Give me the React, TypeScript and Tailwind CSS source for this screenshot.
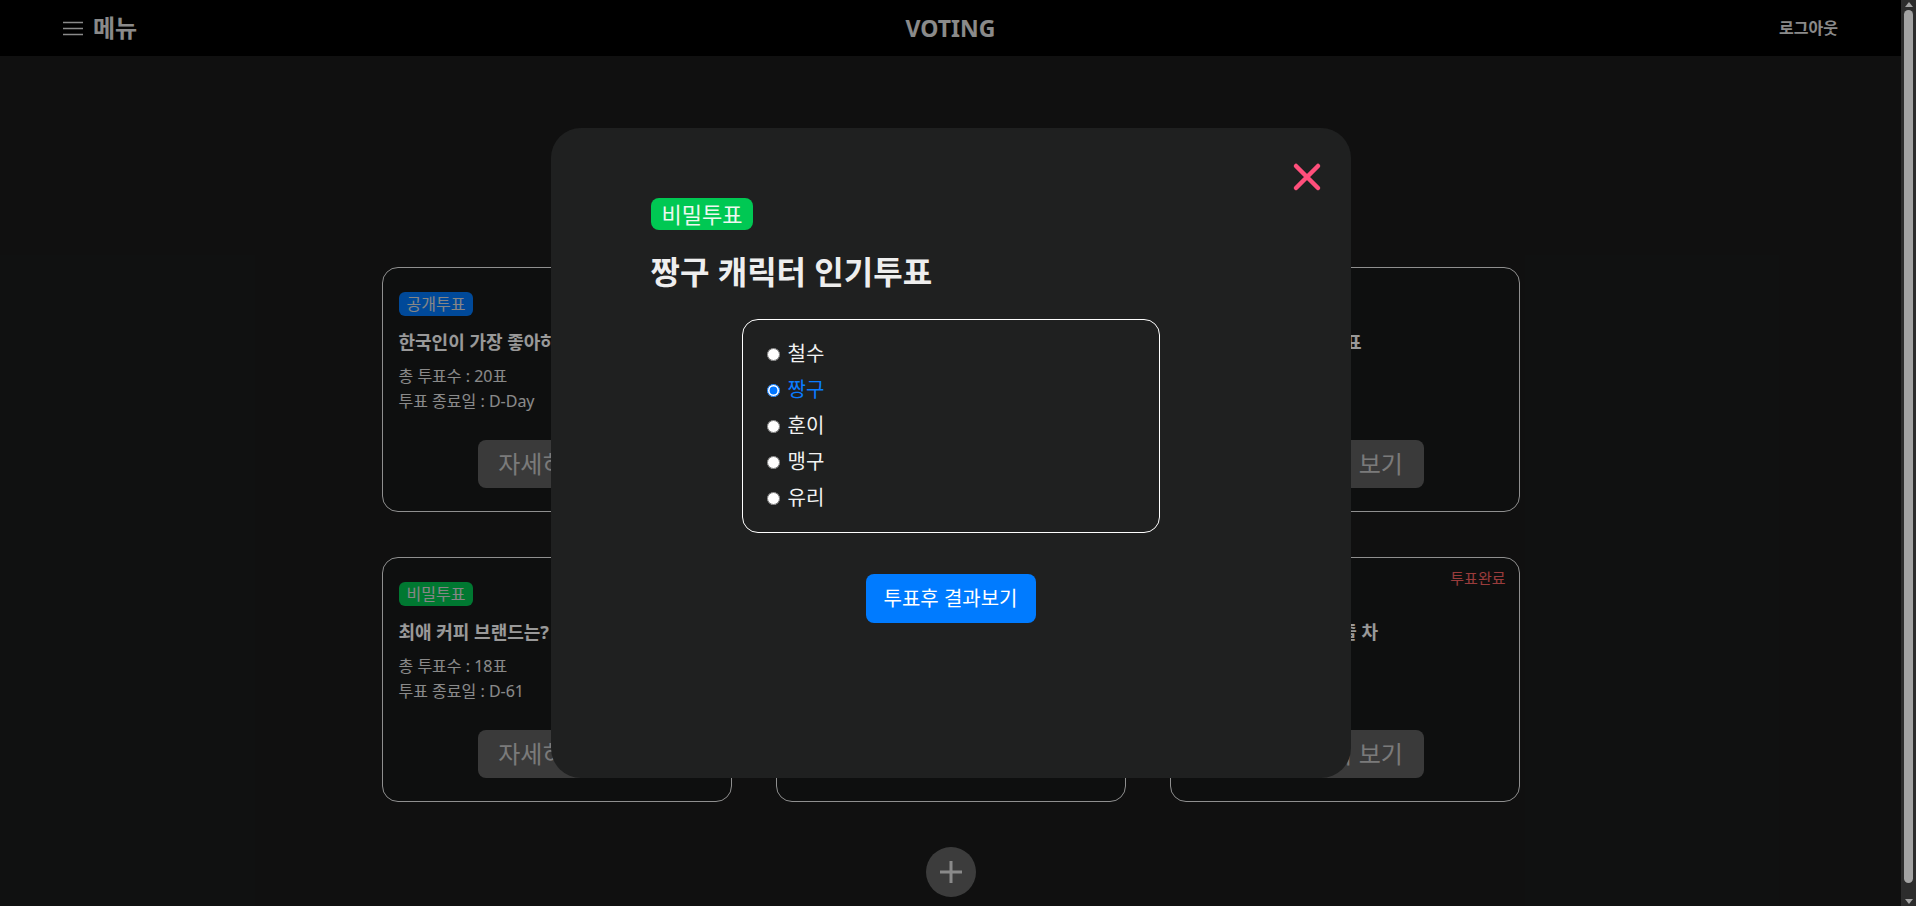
import React, { useState } from "react"

const polls = [
  { type: "공개", title: "한국인이 가장 좋아하는 음식은?", votes: 20, dday: "D-Day", done: false },
  { type: "공개", title: "가장 좋아하는 영화 장르", votes: 15, dday: "D-3", done: false },
  { type: "공개", title: "가장 좋아하는 계절투표", votes: 12, dday: "D-7", done: false },
  { type: "비밀", title: "최애 커피 브랜드는?", votes: 18, dday: "D-61", done: false },
  { type: "공개", title: "여름 휴가 여행지 추천", votes: 9, dday: "D-14", done: false },
  { type: "비밀", title: "우리부모님께 선물해줄 차", votes: 25, dday: "종료", done: true },
]

const options = ["철수", "짱구", "훈이", "맹구", "유리"]

function PollCard({ poll }) {
  return (
    <div className="relative flex h-[245px] flex-col rounded-[16px] border border-[#eeeeee] bg-[#181a1a] px-4 pt-6 pb-[23px]">
      {poll.done && (
        <span className="absolute top-[10px] right-[13px] text-[15px] leading-5 text-[#ff6464]">투표완료</span>
      )}
      <div>
        <span
          className={`inline-flex h-6 items-center rounded-md px-[8px] text-[16px] text-[#e0e0e0] ${
            poll.type === "공개" ? "bg-[#007bff]" : "bg-[#00c853]"
          }`}
        >
          {poll.type}투표
        </span>
      </div>
      <div className="mt-[13px] text-[18px] leading-[27px] font-bold text-white">{poll.title}</div>
      <div className="mt-2 text-[16px] leading-[25px] text-[#e6e6e6]">
        <div>총 투표수 : {poll.votes}표</div>
        <div>투표 종료일 : {poll.dday}</div>
      </div>
      <button className="mx-auto mt-auto h-12 w-[158px] rounded-lg bg-[#616161] text-[24px] text-[#cccccc]">
        자세히 보기
      </button>
    </div>
  )
}

function VoteModal() {
  const [picked, setPicked] = useState(1)

  return (
    <div className="relative h-[650px] w-[800px] rounded-[30px] bg-[#1f2020] px-[100px] pt-[70px] [color-scheme:light]">
      <button className="absolute top-[34px] right-[29px] h-[30px] w-[30px]">
        <svg viewBox="0 0 30 30" className="h-[30px] w-[30px]">
          <path d="M4 4 L26 26 M26 4 L4 26" stroke="#ff4f7b" strokeWidth="4.5" strokeLinecap="round" fill="none" />
        </svg>
      </button>
      <span className="inline-flex h-8 items-center rounded-lg bg-[#00c853] px-[11px] text-[22px] text-[#eef8f0]">
        비밀투표
      </span>
      <h2 className="mt-5 text-[32px] leading-[44px] font-bold text-[#eeeeee]">짱구 캐릭터 인기투표</h2>
      <div className="mx-auto mt-[25px] w-[418px] rounded-[16px] border border-white px-6 py-4">
        {options.map((name, i) => (
          <label key={name} className="flex h-9 items-center gap-2">
            <input
              type="radio"
              name="vote"
              checked={picked === i}
              onChange={() => setPicked(i)}
              className="m-0 h-[13px] w-[13px]"
            />
            <span className={`text-[20px] ${picked === i ? "text-[#0a7bff]" : "text-[#f2f2f2]"}`}>{name}</span>
          </label>
        ))}
      </div>
      <div className="mt-[41px] flex justify-center">
        <button className="h-[49px] rounded-lg bg-[#007bff] px-[18px] text-[20px] text-white">투표후 결과보기</button>
      </div>
    </div>
  )
}

// the window's scrollbar, drawn since the page is a touch taller than the view
function ScrollBar() {
  return (
    <aside className="flex h-screen w-[15px] shrink-0 flex-col items-center bg-[#2c2c2c]">
      <svg width="8" height="5" viewBox="0 0 8 5" className="mt-[2px]">
        <path d="M4 0 L8 5 H0 Z" fill="#a3a3a3" />
      </svg>
      <div className="mt-[3px] h-[873px] w-[9px] rounded-full bg-[#a3a3a3]" />
      <div className="flex-1" />
      <svg width="8" height="5" viewBox="0 0 8 5" className="mb-[2px]">
        <path d="M0 0 H8 L4 5 Z" fill="#a3a3a3" />
      </svg>
    </aside>
  )
}

export default function App() {
  return (
    <div className="flex h-screen overflow-hidden bg-[#1b1c1c] font-['Noto_Sans','Noto_Sans_CJK_KR',sans-serif]">
      <div className="relative min-h-[910px] flex-1">
        <header className="grid h-14 grid-cols-[1fr_auto_1fr] items-center bg-black px-[63px] text-[#e6e6e6]">
          <div className="flex items-center gap-[10px]">
            <svg width="20" height="15" viewBox="0 0 20 15">
              <path d="M0 1.5 H20 M0 7.5 H20 M0 13.5 H20" stroke="#e6e6e6" strokeWidth="1.5" />
            </svg>
            <span className="text-[24px] font-bold">메뉴</span>
          </div>
          <div className="text-[23px] font-bold">VOTING</div>
          <div className="text-right text-[16px] font-bold">로그아웃</div>
        </header>

        <main className="flex flex-col items-center pt-[211px] pb-[13px]">
          <div className="grid grid-cols-[repeat(3,350px)] gap-x-[44px] gap-y-[45px]">
            {polls.map((poll, i) => (
              <PollCard key={i} poll={poll} />
            ))}
          </div>
          <button className="mt-[45px] flex h-[50px] w-[50px] items-center justify-center rounded-full bg-[#656565]">
            <svg width="24" height="24" viewBox="0 0 24 24">
              <path d="M12 1 V23 M1 12 H23" stroke="#e6e6e6" strokeWidth="3" />
            </svg>
          </button>
        </main>

        <div className="absolute inset-0 bg-black/40" />
        <div className="absolute inset-x-0 top-0 flex h-screen items-center justify-center">
          <VoteModal />
        </div>
      </div>
      <ScrollBar />
    </div>
  )
}
